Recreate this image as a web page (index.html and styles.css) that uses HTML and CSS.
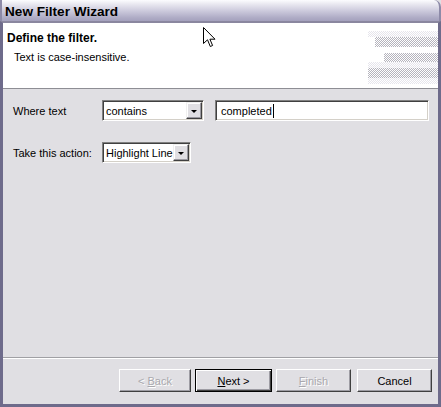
FILE: index.html
```html
<!DOCTYPE html>
<html>
<head>
<meta charset="utf-8">
<link rel="stylesheet" href="styles.css">
</head>
<body>
<div class="window">
  <div class="titlebar"><span class="title">New Filter Wizard</span></div>
  <div class="frame">
    <div class="banner">
      <div class="banner-text">
        <div class="banner-title">Define the filter.</div>
        <div class="banner-msg">Text is case-insensitive.</div>
      </div>
      <div class="banner-art">
        <div class="dots"></div>
        <div class="bar bar1"></div>
        <div class="gap"></div>
        <div class="bar bar2"></div>
        <div class="dots"></div>
        <div class="bar bar3"></div>
        <div class="dots"></div>
      </div>
    </div>
    <div class="content">
      <div class="form">
        <label class="lbl">Where text</label>
        <div class="row1">
          <div class="combo combo-contains"><span class="combo-val">contains</span><span class="drop"><span class="tri"></span></span></div>
          <div class="textfield"><span>completed</span><span class="caret"></span></div>
        </div>
        <label class="lbl">Take this action:</label>
        <div class="row2">
          <div class="combo combo-action"><span class="combo-val">Highlight Line</span><span class="drop"><span class="tri"></span></span></div>
        </div>
      </div>
    </div>
    <div class="buttons">
      <div class="btn btn-back disabled"><span>&lt; <u>B</u>ack</span></div>
      <div class="btn btn-next default"><span><u>N</u>ext &gt;</span></div>
      <div class="btn btn-finish disabled"><span><u>F</u>inish</span></div>
      <div class="btn btn-cancel"><span>Cancel</span></div>
    </div>
  </div>
  <svg class="mouse" width="13" height="21" viewBox="0 0 13 21"><path d="M0.5 0.5 L0.5 16.5 L4.5 12.8 L7.3 19.5 L9.6 18.5 L6.9 12.2 L12 12.2 Z" fill="#fff" stroke="#000" stroke-width="1" stroke-linejoin="miter"/></svg>
</div>
</body>
</html>
```

FILE: styles.css
```css
html, body {
  margin: 0;
  padding: 0;
  background: #e0dfe3;
}
.window {
  position: relative;
  width: 441px;
  height: 407px;
  display: flex;
  flex-direction: column;
  font-family: "Liberation Sans", Arial, sans-serif;
  font-size: 11px;
  color: #000;
  overflow: hidden;
}
.titlebar {
  height: 21px;
  flex: none;
  display: flex;
  align-items: center;
  padding-left: 3px;
  border-top-right-radius: 7px;
  background: linear-gradient(to bottom, #fcfcfe 0%, #e9e8f0 20%, #c9c7da 55%, #aeabc5 85%, #a4a1bd 100%);
  border-right: 2px solid #8d8aa8;
  border-left: 2px solid #8d8aa8;
}
.title {
  font-weight: bold;
  font-size: 13.6px;
  color: #000;
  padding-top: 1px;
}
.frame {
  flex: 1;
  display: flex;
  flex-direction: column;
  border-left: 3px solid #6e6b8b;
  border-right: 3px solid #6e6b8b;
  border-bottom: 3px solid #6e6b8b;
  border-top: 2px solid #8a879f;
  background: #e0dfe3;
  min-height: 0;
}
.banner {
  height: 66px;
  flex: none;
  background: #fff;
  border-bottom: 1px solid #8e8e94;
  display: flex;
  box-sizing: border-box;
}
.banner-text {
  flex: 1;
  padding: 8px 0 0 4px;
}
.banner-title {
  font-weight: bold;
  font-size: 12px;
  line-height: 14px;
}
.banner-msg {
  margin-top: 5px;
  padding-left: 7px;
  line-height: 14px;
}
.banner-art {
  width: 70px;
  padding-top: 8px;
  display: flex;
  flex-direction: column;
  align-items: flex-end;
}
.dots {
  width: 70px;
  height: 6px;
  background: repeating-conic-gradient(#e6e5ec 0 25%, #fff 0 50%) 0 0 / 2px 2px;
}
.gap { height: 6px; }
.bar {
  height: 10px;
  background: repeating-conic-gradient(#b5b4bd 0 25%, #fff 0 50%) 0 0 / 2px 2px;
}
.bar1 { width: 63px; }
.bar2 { width: 54px; height: 9px; }
.bar3 { width: 70px; }
.content {
  flex: 1;
  border-bottom: 1px solid #a0a0a4;
  box-shadow: 0 1px 0 #fff;
}
.form {
  display: grid;
  grid-template-columns: 89px 1fr;
  row-gap: 21px;
  padding: 11px 9px 0 10px;
  align-items: center;
}
.lbl {
  line-height: 14px;
}
.row1, .row2 {
  display: flex;
  gap: 11px;
}
.combo {
  height: 21px;
  box-sizing: border-box;
  background: #fff;
  border-top: 1px solid #808080;
  border-left: 1px solid #808080;
  border-right: 1px solid #fff;
  border-bottom: 1px solid #fff;
  box-shadow: inset 1px 1px 0 #404040, inset -1px -1px 0 #d4d0c8;
  display: flex;
  align-items: center;
  padding: 2px 1px 2px 2px;
}
.combo-contains { width: 102px; }
.combo-action { width: 89px; }
.combo-val {
  flex: 1;
  padding-left: 1px;
  white-space: nowrap;
  overflow: hidden;
}
.drop {
  width: 16px;
  height: 17px;
  flex: none;
  box-sizing: border-box;
  background: #e0dfe3;
  border-top: 1px solid #f0f0f0;
  border-left: 1px solid #f0f0f0;
  border-right: 1px solid #404040;
  border-bottom: 1px solid #404040;
  box-shadow: inset -1px -1px 0 #9a99a0, inset 1px 1px 0 #fff;
  display: flex;
  align-items: center;
  justify-content: center;
}
.tri {
  width: 0;
  height: 0;
  border-left: 3px solid transparent;
  border-right: 3px solid transparent;
  border-top: 3px solid #000;
  margin-top: 1px;
}
.textfield {
  flex: 1;
  height: 21px;
  box-sizing: border-box;
  background: #fff;
  border-top: 1px solid #808080;
  border-left: 1px solid #808080;
  border-right: 1px solid #fff;
  border-bottom: 1px solid #fff;
  box-shadow: inset 1px 1px 0 #404040, inset -1px -1px 0 #d4d0c8;
  display: flex;
  align-items: center;
  padding-left: 5px;
}
.caret {
  width: 1px;
  height: 14px;
  background: #000;
  margin-left: 1px;
}
.buttons {
  flex: none;
  display: flex;
  justify-content: flex-end;
  padding: 10px 6px 12px 0;
  margin-top: 1px;
}
.btn {
  width: 75px;
  height: 23px;
  box-sizing: border-box;
  display: flex;
  align-items: center;
  justify-content: center;
  background: #e0dfe3;
  border-top: 1px solid #fff;
  border-left: 1px solid #fff;
  border-right: 1px solid #404040;
  border-bottom: 1px solid #404040;
  box-shadow: inset -1px -1px 0 #9d9ca3;
  white-space: pre;
}
.btn-back { width: 72px; margin-right: 4px; }
.btn-next { width: 77px; margin-right: 4px; }
.btn-finish { margin-right: 6px; }
.btn.default {
  border: 1px solid #000;
  box-shadow: inset 1px 1px 0 #fff, inset -1px -1px 0 #404040, inset -2px -2px 0 #9d9ca3;
}
.btn.disabled {
  color: #a9a8ad;
  text-shadow: 1px 1px 0 #fff;
}
.mouse {
  position: absolute;
  left: 203px;
  top: 27px;
}
```
